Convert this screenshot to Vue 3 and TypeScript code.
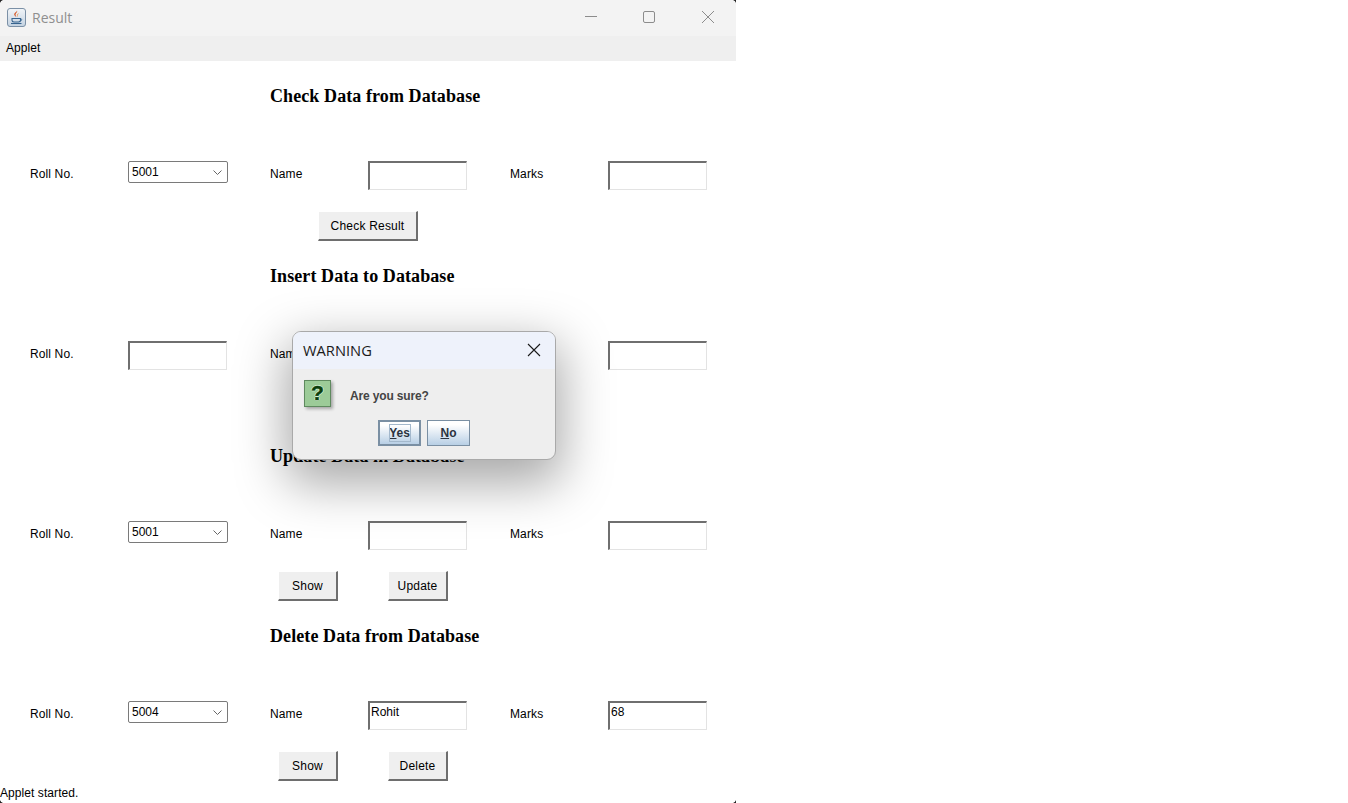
<script setup lang="ts">
type Section = {
  title: string
  roll: string
  rollIsSelect: boolean
  name: string
  marks: string
  buttons: string[]
  buttonClass: string
}

const sections: Section[] = [
  { title: 'Check Data from Database', roll: '5001', rollIsSelect: true, name: '', marks: '', buttons: ['Check Result'], buttonClass: 'actions--check' },
  { title: 'Insert Data to Database', roll: '', rollIsSelect: false, name: '', marks: '', buttons: [], buttonClass: '' },
  { title: 'Update Data in Database', roll: '5001', rollIsSelect: true, name: '', marks: '', buttons: ['Show', 'Update'], buttonClass: 'actions--pair' },
  { title: 'Delete Data from Database', roll: '5004', rollIsSelect: true, name: 'Rohit', marks: '68', buttons: ['Show', 'Delete'], buttonClass: 'actions--pair' },
]
</script>

<template>
  <div class="window">
    <header class="titlebar">
      <svg class="app-icon" width="19" height="19" viewBox="0 0 19 19">
        <defs>
          <linearGradient id="appBg" x1="0" y1="0" x2="0" y2="1">
            <stop offset="0" stop-color="#f2f5f8" />
            <stop offset="1" stop-color="#c3d2e1" />
          </linearGradient>
        </defs>
        <rect x="0.5" y="0.5" width="18" height="18" rx="2.500" fill="url(#appBg)" stroke="#7b90a6" />
        <path d="M10 2.500c1 1.800-2 2.800-1.400 4.700.2.700.7 1.200.9 1.800-1.900-1.100-2.900-2.400-1.900-3.800C8.400 4.300 10 3.800 10 2.500z" fill="#d4501c" />
        <path d="M12 5c-1.100.7-2.100 1.200-1.900 2.400.1.600.4 1 .5 1.600.6-.9-.2-1.500.2-2.300.2-.6.800-1 1.200-1.700z" fill="#ee8a34" />
        <path d="M5 10.500h8.500v1.800c0 1-1 1.700-2 1.700H7c-1 0-2-.7-2-1.700z" fill="none" stroke="#37648f" stroke-width="1.100" />
        <path d="M13.500 11c1.700-.3 1.700 1.700-.3 2" fill="none" stroke="#37648f" stroke-width=".9" />
        <path d="M4 15.500h10.500" stroke="#37648f" stroke-width="1.100" />
      </svg>
      <span class="window-title">Result</span>
      <div class="controls">
        <svg width="12" height="12" viewBox="0 0 12 12" class="control"><path d="M0 5.500h12" stroke="#8c8c8c" stroke-width="1" fill="none" /></svg>
        <svg width="12" height="12" viewBox="0 0 12 12" class="control"><rect x="0.500" y="0.500" width="11" height="11" rx="1.500" stroke="#8c8c8c" fill="none" /></svg>
        <svg width="12" height="12" viewBox="0 0 12 12" class="control control--close"><path d="M0 0l12 12M12 0L0 12" stroke="#8c8c8c" stroke-width="1" fill="none" /></svg>
      </div>
    </header>

    <nav class="menubar">Applet</nav>

    <main class="applet">
      <section v-for="s in sections" :key="s.title" class="section">
        <h2 class="heading">{{ s.title }}</h2>
        <div class="fields">
          <label class="label">Roll No.</label>
          <div v-if="s.rollIsSelect" class="select">
            <span>{{ s.roll }}</span>
            <svg width="9" height="5" viewBox="0 0 9 5"><path d="M.5.500L4.500 4.500 8.500.500" stroke="#666" fill="none" /></svg>
          </div>
          <div v-else class="textbox">{{ s.roll }}</div>
          <label class="label">Name</label>
          <div class="textbox">{{ s.name }}</div>
          <label class="label">Marks</label>
          <div class="textbox">{{ s.marks }}</div>
        </div>
        <div v-if="s.buttons.length" class="actions" :class="s.buttonClass">
          <button v-for="b in s.buttons" :key="b" class="awt-button">{{ b }}</button>
        </div>
      </section>
    </main>

    <footer class="status">Applet started.</footer>

    <div class="dialog">
      <div class="dialog-title">
        <span>WARNING</span>
        <svg width="14" height="14" viewBox="0 0 14 14"><path d="M1 1l12 12M13 1L1 13" stroke="#1a1a1a" stroke-width="1.100" fill="none" /></svg>
      </div>
      <div class="dialog-body">
        <div class="message">
          <div class="question">?</div>
          <span class="message-text">Are you sure?</span>
        </div>
        <div class="dialog-buttons">
          <button class="metal-button metal-button--focus"><span class="focus-ring"><u>Y</u>es</span></button>
          <button class="metal-button"><u>N</u>o</button>
        </div>
      </div>
    </div>

    <i class="corner corner--tl"></i>
    <i class="corner corner--tr"></i>
    <i class="corner corner--bl"></i>
    <i class="corner corner--br"></i>
  </div>
</template>

<style>
html,
body {
  margin: 0;
  background: #ffffff;
}
</style>

<style scoped>
.window {
  position: relative;
  width: 736px;
  height: 803px;
  display: flex;
  flex-direction: column;
  overflow: hidden;
  background: #ffffff;
  font-family: "Liberation Sans", Arial, sans-serif;
  font-size: 12px;
  color: #000000;
}

.corner {
  position: absolute;
  width: 3px;
  height: 3px;
}

.corner--tl {
  left: 0;
  top: 0;
  background: radial-gradient(circle at 100% 100%, transparent 2.4px, #222222 3px);
}

.corner--tr {
  right: 0;
  top: 0;
  background: radial-gradient(circle at 0 100%, transparent 2.4px, #222222 3px);
}

.corner--bl {
  left: 0;
  bottom: 0;
  background: radial-gradient(circle at 100% 0, transparent 2.4px, #222222 3px);
}

.corner--br {
  right: 0;
  bottom: 0;
  background: radial-gradient(circle at 0 0, transparent 2.4px, #222222 3px);
}

.titlebar {
  box-sizing: border-box;
  height: 36px;
  display: flex;
  align-items: center;
  padding: 0 0 2px 7px;
  background: #f3f3f3;
  flex: none;
}

.app-icon {
  margin-right: 6px;
}

.window-title {
  font-family: "Open Sans", "Noto Sans", sans-serif;
  font-size: 14px;
  color: #8f8f8f;
}

.controls {
  margin-left: auto;
  display: flex;
  gap: 46px;
  padding-right: 22px;
}

.control {
  display: block;
}

.control--close {
  margin-left: 1px;
}

.menubar {
  height: 25px;
  line-height: 25px;
  padding-left: 6px;
  background: #efefef;
  flex: none;
  letter-spacing: 0.05px;
}

.applet {
  padding-top: 20px;
  flex: none;
}

.section {
  height: 180px;
}

.section:last-child {
  height: 160px;
}

.heading {
  margin: 0 0 50px 270px;
  font-family: "Liberation Serif", "Times New Roman", serif;
  font-size: 18px;
  font-weight: 700;
  line-height: 30px;
  letter-spacing: 0.09px;
}

.fields {
  display: grid;
  grid-template-columns: 98px 142px 98px 142px 98px 99px;
  height: 29px;
  padding-left: 30px;
}

.label {
  line-height: 27px;
  letter-spacing: 0.12px;
}

.select {
  box-sizing: border-box;
  width: 100px;
  height: 22px;
  display: flex;
  align-items: center;
  justify-content: space-between;
  padding: 0 5px 0 3px;
  border: 1px solid #7a7a7a;
  border-radius: 2px;
  background: #ffffff;
}

.textbox {
  box-sizing: border-box;
  width: 99px;
  height: 29px;
  padding-left: 1px;
  line-height: 18px;
  border-style: solid;
  border-width: 2px 1px 1px 2px;
  border-color: #6f6f6f #e3e3e3 #e3e3e3 #6f6f6f;
}

.actions {
  display: flex;
  margin-top: 21px;
}

.actions--check {
  padding-left: 318px;
}

.actions--check .awt-button {
  width: 100px;
}

.actions--pair {
  padding-left: 278px;
  gap: 50px;
}

.awt-button {
  box-sizing: border-box;
  width: 60px;
  height: 30px;
  padding: 0;
  font: inherit;
  letter-spacing: 0.2px;
  color: #000000;
  background: #efefef;
  border-style: solid;
  border-width: 1px 2px 2px 1px;
  border-color: #ffffff #6e6e6e #6e6e6e #ffffff;
}

.status {
  position: absolute;
  left: 0;
  bottom: 2px;
  line-height: 16px;
  letter-spacing: 0.07px;
}

.dialog {
  position: absolute;
  left: 292px;
  top: 331px;
  box-sizing: border-box;
  width: 264px;
  height: 129px;
  border: 1px solid #a9a9a9;
  border-radius: 9px;
  overflow: hidden;
  background: #eeeeee;
  box-shadow: 0 18px 50px 6px rgba(0, 0, 0, 0.34);
}

.dialog-title {
  box-sizing: border-box;
  height: 37px;
  display: flex;
  align-items: center;
  justify-content: space-between;
  padding: 0 14px 2px 10px;
  background: #eef2fb;
  font-family: "Open Sans", "Noto Sans", sans-serif;
  font-size: 14.7px;
  color: #1a1a1a;
}

.dialog-body {
  padding: 10px 0 0 11px;
}

.message {
  display: flex;
  align-items: center;
  height: 28px;
}

.question {
  box-sizing: border-box;
  width: 27px;
  height: 27px;
  border: 1px solid #5f8a5f;
  background: #9ccb98;
  box-shadow: 2px 2px 3px rgba(0, 0, 0, 0.3);
  text-align: center;
  font-size: 21px;
  font-weight: 700;
  line-height: 24px;
  color: #0b3f0b;
  -webkit-text-stroke: 0.5px #0b3f0b;
  text-shadow: 1px 0 0 #d8f5d8, -1px 0 0 #d8f5d8, 0 1px 0 #d8f5d8, 0 -1px 0 #d8f5d8;
}

.message-text {
  margin-left: 19px;
  margin-top: 5px;
  font-weight: 700;
  letter-spacing: -0.15px;
  color: #444444;
}

.dialog-buttons {
  display: flex;
  gap: 6px;
  margin-top: 13px;
  padding-left: 74px;
}

.metal-button {
  box-sizing: border-box;
  width: 43px;
  height: 26px;
  padding: 0;
  font: inherit;
  font-weight: 700;
  color: #2b3440;
  border: 1px solid #7a8fa3;
  background: linear-gradient(#ffffff 15%, #b8cfe5);
}

.metal-button--focus {
  border-width: 2px;
}

.focus-ring {
  display: inline-block;
  box-sizing: border-box;
  width: 22px;
  height: 18px;
  line-height: 19px;
  outline: 1px solid #a3b8cc;
  outline-offset: -1px;
}
</style>
